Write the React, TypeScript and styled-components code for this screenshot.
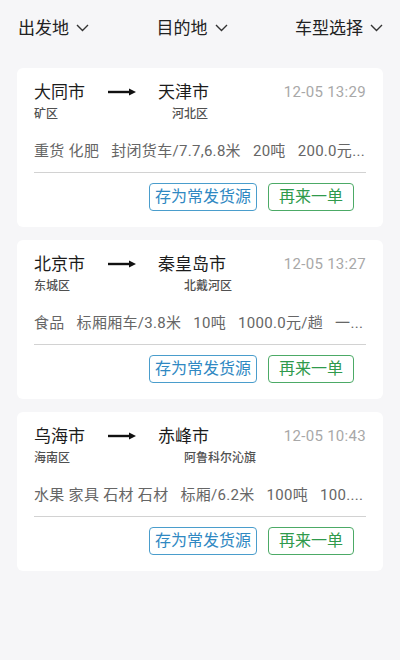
import styled, { createGlobalStyle } from "styled-components";

const GlobalStyle = createGlobalStyle`
  html, body {
    margin: 0;
    padding: 0;
    background: #f6f6f8;
  }
  body {
    font-family: Roboto, "Noto Sans CJK SC", sans-serif;
    color: #222;
  }
`

const Page = styled.div`
  width: 400px;
  min-height: 660px;
  background: #f6f6f8;
`

const FilterBar = styled.div`
  height: 55px;
  display: flex;
  align-items: center;
  justify-content: space-between;
  padding: 0 17px 0 18px;
`

const FilterItem = styled.div`
  display: flex;
  align-items: center;
  gap: 7px;
  font-size: 17px;
  line-height: 22px;
  color: #222;
`

const List = styled.div`
  display: flex;
  flex-direction: column;
  gap: 13px;
  padding: 13px 17px 0 17px;
`

const Card = styled.div`
  background: #fff;
  border-radius: 6px;
  padding: 13px 17px 16px 17px;
`

const RouteRow = styled.div`
  display: flex;
  align-items: center;
  height: 22px;
`

const City = styled.div<{ $from?: boolean }>`
  font-size: 17px;
  line-height: 22px;
  color: #1c1c1c;
  min-width: ${(p) => (p.$from ? "74px" : "0")};
`

const ArrowWrap = styled.div`
  width: 28px;
  height: 22px;
  display: flex;
  align-items: center;
  margin-right: 22px;
`

const Time = styled.div`
  margin-left: auto;
  font-size: 15px;
  letter-spacing: 0.3px;
  line-height: 22px;
  color: #a8a8a8;
`

const DistrictRow = styled.div`
  display: flex;
  margin-top: 3px;
  font-size: 12px;
  line-height: 16px;
  font-weight: 500;
  color: #505050;
`

const DistrictTo = styled.span`
  margin-left: 114px;
`

const Details = styled.div`
  margin-top: 19px;
  font-size: 15px;
  letter-spacing: 0.3px;
  line-height: 20px;
  color: #666;
  white-space: nowrap;
`

const DetailItem = styled.span`
  margin-right: 12px;
`

const Divider = styled.div`
  margin-top: 11px;
  height: 1px;
  background: #d2d2d2;
`

const Actions = styled.div`
  display: flex;
  justify-content: flex-end;
  gap: 11px;
  margin-top: 10px;
  padding-right: 12px;
`

const ActionButton = styled.button<{ $tone: "blue" | "green" }>`
  height: 28px;
  box-sizing: border-box;
  padding: 0 ${(p) => (p.$tone === "blue" ? "5px" : "10px")};
  border-radius: 4px;
  background: #fff;
  font-family: Roboto, "Noto Sans CJK SC", sans-serif;
  font-size: 16px;
  line-height: 26px;
  border: 1px solid ${(p) => (p.$tone === "blue" ? "#4a9dcc" : "#4caa66")};
  color: ${(p) => (p.$tone === "blue" ? "#2f88c2" : "#2f9a4c")};
`

const Chevron = () => (
  <svg width="13" height="8" viewBox="0 0 13 8">
    <path d="M1 1 L6.5 6.5 L12 1" fill="none" stroke="#333" strokeWidth="1.4" />
  </svg>
)

const Arrow = () => (
  <svg width="28" height="8" viewBox="0 0 28 8">
    <rect x="0" y="2.8" width="23" height="2.4" fill="#111" />
    <path d="M21 0.5 L28 4 L21 7.5 Z" fill="#111" />
  </svg>
)

const orders = [
  {
    from: "大同市",
    to: "天津市",
    fromDistrict: "矿区",
    toDistrict: "河北区",
    time: "12-05 13:29",
    details: ["重货 化肥", "封闭货车/7.7,6.8米", "20吨", "200.0元..."],
  },
  {
    from: "北京市",
    to: "秦皇岛市",
    fromDistrict: "东城区",
    toDistrict: "北戴河区",
    time: "12-05 13:27",
    details: ["食品", "标厢厢车/3.8米", "10吨", "1000.0元/趟", "一..."],
  },
  {
    from: "乌海市",
    to: "赤峰市",
    fromDistrict: "海南区",
    toDistrict: "阿鲁科尔沁旗",
    time: "12-05 10:43",
    details: ["水果 家具 石材 石材", "标厢/6.2米", "100吨", "100...."],
  },
]

export default function App() {
  return (
    <Page>
      <GlobalStyle />
      <FilterBar>
        {["出发地", "目的地", "车型选择"].map((label) => (
          <FilterItem key={label}>
            {label}
            <Chevron />
          </FilterItem>
        ))}
      </FilterBar>
      <List>
        {orders.map((o) => (
          <Card key={o.time}>
            <RouteRow>
              <City $from>{o.from}</City>
              <ArrowWrap>
                <Arrow />
              </ArrowWrap>
              <City>{o.to}</City>
              <Time>{o.time}</Time>
            </RouteRow>
            <DistrictRow>
              <span>{o.fromDistrict}</span>
              <DistrictTo>{o.toDistrict}</DistrictTo>
            </DistrictRow>
            <Details>
              {o.details.map((d, i) => (
                <DetailItem key={i}>{d}</DetailItem>
              ))}
            </Details>
            <Divider />
            <Actions>
              <ActionButton $tone="blue">存为常发货源</ActionButton>
              <ActionButton $tone="green">再来一单</ActionButton>
            </Actions>
          </Card>
        ))}
      </List>
    </Page>
  )
}
